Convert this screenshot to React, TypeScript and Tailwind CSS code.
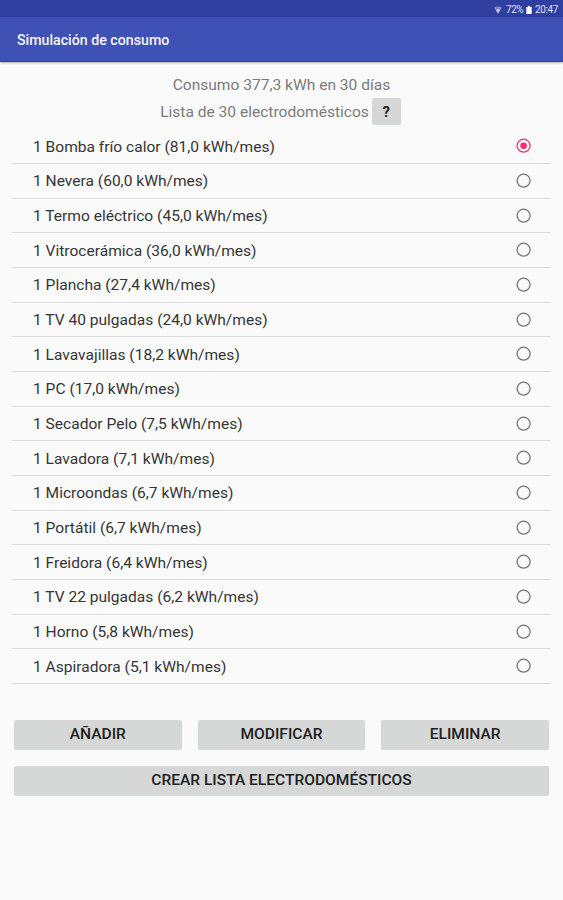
import { useState } from "react";

const appliances = [
  { name: "Bomba frío calor", usage: "81,0" },
  { name: "Nevera", usage: "60,0" },
  { name: "Termo eléctrico", usage: "45,0" },
  { name: "Vitrocerámica", usage: "36,0" },
  { name: "Plancha", usage: "27,4" },
  { name: "TV 40 pulgadas", usage: "24,0" },
  { name: "Lavavajillas", usage: "18,2" },
  { name: "PC", usage: "17,0" },
  { name: "Secador Pelo", usage: "7,5" },
  { name: "Lavadora", usage: "7,1" },
  { name: "Microondas", usage: "6,7" },
  { name: "Portátil", usage: "6,7" },
  { name: "Freidora", usage: "6,4" },
  { name: "TV 22 pulgadas", usage: "6,2" },
  { name: "Horno", usage: "5,8" },
  { name: "Aspiradora", usage: "5,1" },
];

function StatusBar() {
  return (
    <div className="flex h-[17px] items-center justify-end bg-[#303f9f] pt-[2px] pr-[5px] text-[10px] leading-none text-[#dfe2f5]">
      <svg className="mr-[4px] h-[8px] w-[8px]" viewBox="0 0 9 8">
        <path d="M0 1.5C2.6-.3 6.4-.3 9 1.5L4.5 8z" fill="#7f89c8" />
        <path d="M2 3.8c1.5-1 3.5-1 5 0L4.5 8z" fill="#c5caea" />
      </svg>
      <span className="tracking-[-0.5px]">72%</span>
      <svg className="mr-[3px] ml-[3px] h-[8px] w-[6px]" viewBox="0 0 6 9">
        <path d="M1.8 0h2.4v1H6v8H0V1h1.8z" fill="#fff" />
      </svg>
      <span className="tracking-[-0.4px]">20:47</span>
    </div>
  );
}

function Radio({ checked }: { checked: boolean }) {
  return (
    <svg
      className={checked ? "size-4 text-[#f52d74]" : "size-4 text-[#747474]"}
      viewBox="0 0 16 16"
    >
      <circle cx="7.6" cy="7.7" r="6.5" fill="none" stroke="currentColor" strokeWidth="1.3" />
      {checked && <circle cx="7.6" cy="7.7" r="3.3" fill="currentColor" />}
    </svg>
  );
}

function Button({ label }: { label: string }) {
  return (
    <button className="flex h-[29px] w-full items-center justify-center rounded-[2px] bg-[#d6d7d7] text-[15.55px] leading-[29px] font-medium text-[#202020] shadow-[0_1px_1px_rgba(0,0,0,0.15)]">
      {label}
    </button>
  );
}

export default function App() {
  const [selected, setSelected] = useState(0);

  return (
    <div className="min-h-screen bg-[#fafafa] font-[Roboto,sans-serif]">
      <StatusBar />
      <header className="flex h-[45px] items-center border-b border-[#2b3ea8] bg-[#3f51b5] pt-[3px] pl-[17px] shadow-[0_1px_2px_rgba(0,0,0,0.3)]">
        <h1 className="text-[14.2px] font-medium text-[#f4f5fc]">
          Simulación de consumo
        </h1>
      </header>

      <main className="px-3 pt-3">
        <div className="text-center text-[15.55px] text-[#7b7b7b]">
          <p className="h-6 leading-[23px]">Consumo 377,3 kWh en 30 días</p>
          <div className="flex h-[27px] items-center justify-center gap-[3px] pr-[2px]">
            <p className="pt-[3px]">Lista de 30 electrodomésticos</p>
            <button className="h-[27px] w-[29px] rounded-[2px] bg-[#d6d7d7] pt-px text-[15px] font-bold text-[#202020]">
              ?
            </button>
          </div>
        </div>

        <ul className="mt-[4.5px]">
          {appliances.map((appliance, index) => (
            <li
              key={appliance.name}
              className="flex h-[34.67px] items-center justify-between border-b border-[#dedede] pr-[19px] pl-[21px] text-[15.55px] text-[#353535]"
              onClick={() => setSelected(index)}
            >
              <span className="pt-[2px]">
                1 {appliance.name} ({appliance.usage} kWh/mes)
              </span>
              <Radio checked={selected === index} />
            </li>
          ))}
        </ul>

        <div className="mt-[35.5px] grid grid-cols-3 gap-4 px-[2px]">
          <Button label="AÑADIR" />
          <Button label="MODIFICAR" />
          <Button label="ELIMINAR" />
        </div>
        <div className="mt-[17px] px-[2px]">
          <Button label="CREAR LISTA ELECTRODOMÉSTICOS" />
        </div>
      </main>
    </div>
  );
}
